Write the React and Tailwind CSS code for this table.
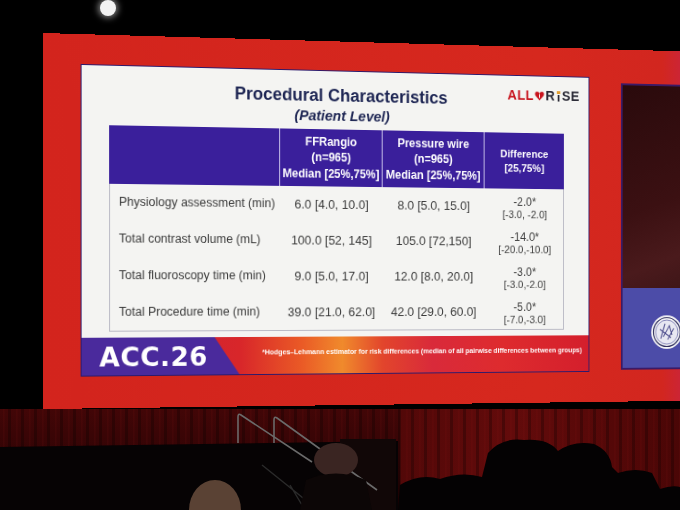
import React from "react";

const rows = [
  { label: "Physiology assessment (min)", a: "6.0 [4.0, 10.0]", b: "8.0 [5.0, 15.0]", d: "-2.0*", r: "[-3.0, -2.0]" },
  { label: "Total contrast volume (mL)", a: "100.0 [52, 145]", b: "105.0 [72,150]", d: "-14.0*", r: "[-20.0,-10.0]" },
  { label: "Total fluoroscopy time (min)", a: "9.0 [5.0, 17.0]", b: "12.0 [8.0, 20.0]", d: "-3.0*", r: "[-3.0,-2.0]" },
  { label: "Total Procedure time (min)", a: "39.0 [21.0, 62.0]", b: "42.0 [29.0, 60.0]", d: "-5.0*", r: "[-7.0,-3.0]" },
];

// the photo is taken at an angle, so the whole screen gets a light perspective tilt
const cols = "grid grid-cols-[177px_110px_112px_90px]";

function Logo() {
  return (
    <div className="flex items-end text-[14.5px] font-bold leading-[11px] tracking-[0.5px] text-[#2a2a36]">
      <span className="text-[#c8141e]">ALL</span>
      <svg width="11" height="11" viewBox="0 0 10 10" className="mx-[1px]">
        <path d="M5 9.4 L1 5 C-0.2 3.6 0.4 1 2.5 1 C3.7 1 4.5 1.8 5 2.6 C5.5 1.8 6.3 1 7.5 1 C9.6 1 10.2 3.6 9 5 Z" fill="#c8141e" />
        <path d="M5 3.2 L5 7" stroke="#f4f4f2" strokeWidth="0.9" />
      </svg>
      <span>R</span>
      <span className="flex flex-col items-center mx-[2px] mb-[0.5px]">
        <span className="w-[3.5px] h-[3px] bg-[#e3a032]" />
        <span className="w-[2.6px] h-[7px] mt-[0.5px] bg-[#2a2a36]" />
      </span>
      <span>SE</span>
    </div>
  );
}

function Slide() {
  return (
    <div className="w-[547px] h-[314px] shrink-0 bg-[#f4f4f2] border border-[#2d1a6c] flex flex-col">
      <div className="grid grid-cols-[1fr_auto_1fr]">
        <div />
        <div className="flex flex-col items-center pt-[16px] text-[#1c2452]">
          <div className="text-[18px] leading-[19px] font-bold">Procedural Characteristics</div>
          <div className="mt-[2px] text-[15px] leading-[17px] font-bold italic">(Patient Level)</div>
        </div>
        <div className="flex justify-end items-start pr-[10px] pt-[15px]">
          <Logo />
        </div>
      </div>

      <div className="ml-[28px] mt-[6px] w-[489px]">
        <div className={`${cols} h-[59px] bg-[#3a1f9b] text-white font-bold`}>
          <div />
          <div className="flex flex-col items-center justify-center text-[12px] leading-[16.5px] border-l border-[#cfc8ee]">
            <span>FFRangio</span>
            <span>(n=965)</span>
            <span className="whitespace-nowrap">Median [25%,75%]</span>
          </div>
          <div className="flex flex-col items-center justify-center text-[12px] leading-[16.5px] border-l border-[#cfc8ee]">
            <span>Pressure wire</span>
            <span>(n=965)</span>
            <span className="whitespace-nowrap">Median [25%,75%]</span>
          </div>
          <div className="flex flex-col items-center justify-center text-[11px] leading-[15px] border-l border-[#cfc8ee]">
            <span>Difference</span>
            <span>[25,75%]</span>
          </div>
        </div>
        <div className="border-x border-b border-[#b9b9c4] text-[#3a3a3a]">
          {rows.map((row) => (
            <div key={row.label} className={`${cols} h-[37px] items-center`}>
              <div className="pl-[9px] text-[12.5px] whitespace-nowrap">{row.label}</div>
              <div className="text-center text-[13px] whitespace-nowrap">{row.a}</div>
              <div className="text-center text-[13px] whitespace-nowrap">{row.b}</div>
              <div className="flex flex-col items-center leading-[13px] pt-[5px]">
                <span className="text-[12px]">{row.d}</span>
                <span className="text-[11px] whitespace-nowrap">{row.r}</span>
              </div>
            </div>
          ))}
        </div>
      </div>

      <div className="mt-auto h-[38px] flex items-center bg-[linear-gradient(90deg,#c81f3a_0%,#d8262a_30%,#ea5a26_42%,#f08a2c_50%,#e2452c_58%,#d92a3a_68%,#de2b2e_82%,#d41f2c_100%)]">
        <div className="w-[163px] h-full shrink-0 bg-[#4a2a9c] [clip-path:polygon(0_0,84%_0,100%_100%,0_100%)] flex items-center pl-[18px]">
          <span className="text-white text-[27px] font-bold leading-none font-['DejaVu_Sans',sans-serif] tracking-[0.6px]">ACC.26</span>
        </div>
        <span className="ml-[24px] -mt-[6px] text-white text-[7.3px] font-bold whitespace-nowrap">
          *Hodges–Lehmann estimator for risk differences (median of all pairwise differences between groups)
        </span>
      </div>
    </div>
  );
}

function SidePanel() {
  return (
    <div className="ml-[36px] mt-[6px] w-[110px] h-[306px] shrink-0 border-2 border-r-0 border-[#3b1a66] flex flex-col">
      <div className="flex-1 bg-[linear-gradient(160deg,#2a0a0c_0%,#3b1012_55%,#4a1a1c_80%,#3a1416_100%)]" />
      <div className="h-[85px] bg-[#4c4ca8] flex items-center pl-[32px] pt-[8px]">
        <svg width="38" height="38" viewBox="0 0 38 38">
          <circle cx="19" cy="19" r="18" fill="#f4f4f6" />
          <circle cx="19" cy="19" r="15.5" fill="none" stroke="#2b2a5a" strokeWidth="1.2" />
          <circle cx="19" cy="19" r="13" fill="#e8e8f2" stroke="#6a6aa8" strokeWidth="0.8" />
          <path d="M12 26 L17 10 M15 24 L22 12 L25 22 M20 27 L27 15 M11 16 L24 25" stroke="#4a4a8a" strokeWidth="1.1" fill="none" />
        </svg>
      </div>
    </div>
  );
}

function Audience() {
  return (
    <svg width="680" height="101" viewBox="0 0 680 101" className="block shrink-0">
      <defs>
        <linearGradient id="curtain" x1="0" y1="0" x2="0" y2="1">
          <stop offset="0" stopColor="#420607" />
          <stop offset="1" stopColor="#220203" />
        </linearGradient>
        <linearGradient id="curtainR" x1="0" y1="0" x2="1" y2="0">
          <stop offset="0" stopColor="#520808" />
          <stop offset="0.4" stopColor="#630b0b" />
          <stop offset="1" stopColor="#4a0606" />
        </linearGradient>
        <pattern id="folds" width="13" height="101" patternUnits="userSpaceOnUse">
          <rect x="8" width="3" height="101" fill="#000" opacity="0.25" />
          <rect x="3" width="1.5" height="101" fill="#a01818" opacity="0.08" />
        </pattern>
      </defs>
      <rect width="680" height="101" fill="url(#curtain)" />
      <rect x="400" width="280" height="101" fill="url(#curtainR)" />
      <rect width="680" height="101" fill="url(#folds)" />
      <path d="M0 38 L398 32 L398 101 L0 101 Z" fill="#060304" />
      <rect x="340" y="30" width="56" height="71" fill="#110707" />
      <path d="M238 34 L238 8 Q238 4 241 6 L312 53" stroke="#6a6a6a" strokeWidth="1.6" fill="none" />
      <path d="M274 34 L274 11 Q274 7 277 9 L377 81" stroke="#6a6a6a" strokeWidth="1.6" fill="none" />
      <path d="M262 56 L318 101 M290 76 L305 101" stroke="#2a2a2a" strokeWidth="1.4" />
      <ellipse cx="336" cy="51" rx="22" ry="17" fill="#3a2522" />
      <path d="M300 101 L306 71 Q336 58 366 71 L372 101 Z" fill="#0c0606" />
      <ellipse cx="215" cy="101" rx="26" ry="30" fill="#5a4234" />
      <path d="M398 101 L400 76 Q420 64 440 70 Q462 62 482 68 L488 44 Q502 28 524 31 Q548 29 558 42 Q574 31 594 35 Q610 42 612 58 L618 64 Q636 58 652 64 L660 80 Q672 76 680 78 L680 101 Z" fill="#040203" />
    </svg>
  );
}

export default function App() {
  return (
    <div className="w-[680px] h-[510px] overflow-hidden bg-black flex flex-col font-['Liberation_Sans',Arial,sans-serif]">
      <div className="h-[33px] shrink-0 pl-[100px]">
        <div className="w-[16px] h-[16px] rounded-full bg-[#f2f2f2] shadow-[0_0_6px_2px_rgba(255,255,255,0.5)]" />
      </div>
      <div className="w-[760px] h-[376px] shrink-0 ml-[43px] flex items-start pt-[30px] pl-[38px] origin-[0_260px] [transform:perspective(1000px)_rotateY(6.3deg)] bg-[linear-gradient(90deg,#d3241d_0%,#d6281e_70%,#d2261f_88%,#c72447_93%,#c0235a_100%)]">
        <Slide />
        <SidePanel />
      </div>
      <Audience />
    </div>
  );
}
